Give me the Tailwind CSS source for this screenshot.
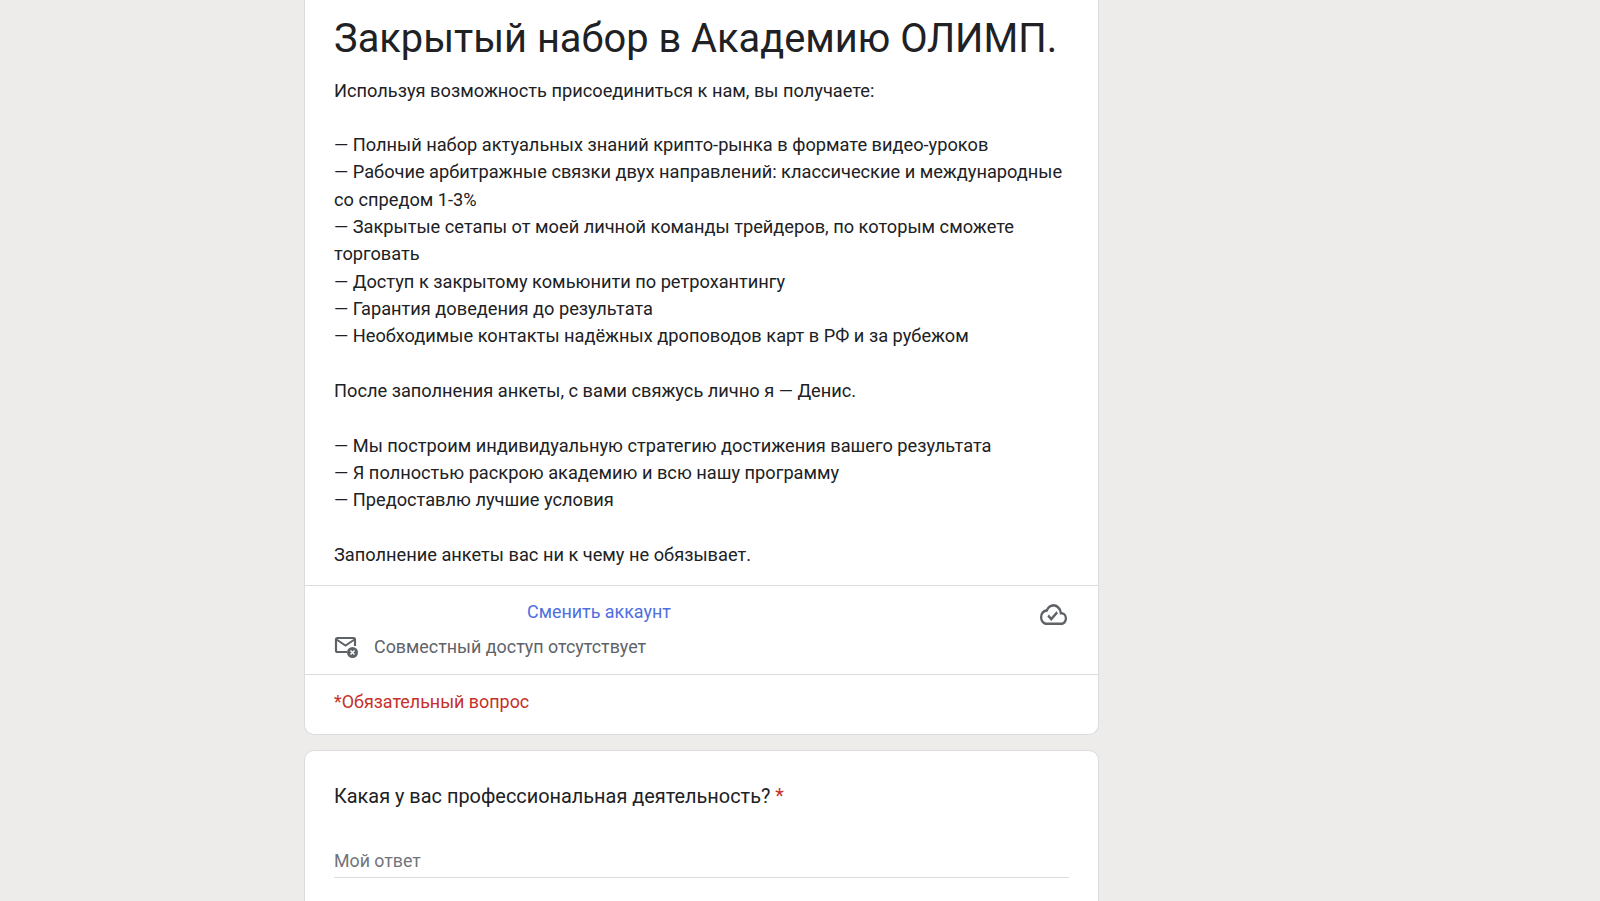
<!DOCTYPE html>
<html lang="ru">
<head>
<meta charset="utf-8">
<script src="https://cdn.jsdelivr.net/npm/@tailwindcss/browser@4"></script>
</head>
<body class="bg-[#edecea] font-['Roboto',sans-serif]">
<div class="h-[901px] overflow-hidden">
  <main class="w-[795px] ml-[304px] flex flex-col gap-[15px]">
    <section class="bg-white border border-t-0 border-[#dadce0] rounded-b-[10px] h-[735px] flex flex-col">
      <div class="px-[29px] h-[585px] shrink-0">
        <h1 class="text-[39.8px] leading-[48px] pt-[15px] text-[#202124] font-normal whitespace-nowrap">Закрытый набор в Академию ОЛИМП.</h1>
        <div class="mt-[13.5px] text-[18.23px] leading-[27.32px] text-[#202124]">
          <p>Используя возможность присоединиться к нам, вы получаете:</p>
          <p class="mt-[27.32px]">— Полный набор актуальных знаний крипто-рынка в формате видео-уроков</p>
          <p>— Рабочие арбитражные связки двух направлений: классические и международные со спредом 1-3%</p>
          <p>— Закрытые сетапы от моей личной команды трейдеров, по которым сможете торговать</p>
          <p>— Доступ к закрытому комьюнити по ретрохантингу</p>
          <p>— Гарантия доведения до результата</p>
          <p>— Необходимые контакты надёжных дроповодов карт в РФ и за рубежом</p>
          <p class="mt-[27.32px]">После заполнения анкеты, с вами свяжусь лично я — Денис.</p>
          <p class="mt-[27.32px]">— Мы построим индивидуальную стратегию достижения вашего результата</p>
          <p>— Я полностью раскрою академию и всю нашу программу</p>
          <p>— Предоставлю лучшие условия</p>
          <p class="mt-[27.32px]">Заполнение анкеты вас ни к чему не обязывает.</p>
        </div>
      </div>
      <div class="border-t border-[#dadce0] h-[89px] shrink-0 px-[29px] relative">
        <div class="pl-[193px] pt-[14px] text-[17.9px] leading-[24px] text-[#4f6fe0]">Сменить аккаунт</div>
        <div class="flex items-center mt-[11px] text-[17.9px] leading-[24px] text-[#5f6368]">
          <svg class="w-[24px] h-[24px] mr-[16px]" viewBox="0 0 24 24" fill="none">
            <path d="M13 17H3.5A1.5 1.5 0 0 1 2 15.5v-11A1.5 1.5 0 0 1 3.5 3h16A1.5 1.5 0 0 1 21 4.5V11" stroke="#5f6368" stroke-width="2.2"/>
            <path d="M2.5 4.5l9 6 9-6" stroke="#5f6368" stroke-width="2"/>
            <circle cx="18.5" cy="17.5" r="5.5" fill="#5f6368"/>
            <path d="M16.5 15.5l4 4m0-4l-4 4" stroke="#fff" stroke-width="1.4"/>
          </svg>
          <span>Совместный доступ отсутствует</span>
        </div>
        <svg class="absolute right-[31px] top-[18px] w-[27px] h-[21px]" viewBox="0 4 24 16" preserveAspectRatio="none" fill="none">
          <path d="M19.35 10.04A7.49 7.49 0 0 0 12 4C9.11 4 6.6 5.64 5.35 8.04A5.99 5.99 0 0 0 0 14c0 3.31 2.69 6 6 6h13c2.76 0 5-2.24 5-5 0-2.64-2.05-4.78-4.65-4.96zM19 18H6c-2.21 0-4-1.79-4-4 0-2.05 1.53-3.76 3.56-3.97l1.07-.11.5-.95A5.47 5.47 0 0 1 12 6c2.62 0 4.88 1.86 5.39 4.43l.3 1.5 1.53.11A2.98 2.98 0 0 1 22 15c0 1.65-1.35 3-3 3zm-9-3.82L7.91 12.09 6.5 13.5 10 17l6.01-6.01-1.41-1.41z" fill="#5f6368"/>
        </svg>
      </div>
      <div class="border-t border-[#dadce0] px-[29px] pt-[15px] text-[17.9px] leading-[24px] text-[#c5302a]">*Обязательный вопрос</div>
    </section>
    <section class="bg-white border border-[#dadce0] rounded-t-[10px] h-[200px] px-[29px]">
      <div class="pt-[33px] text-[19.9px] leading-[26px] text-[#202124]">Какая у вас профессиональная деятельность? <span class="text-[#c5302a]">*</span></div>
      <div class="mt-[39px] border-b border-[#dadce0] h-[29px] text-[17.8px] leading-[24px] text-[#70757a]">Мой ответ</div>
    </section>
  </main>
</div>
</body>
</html>
